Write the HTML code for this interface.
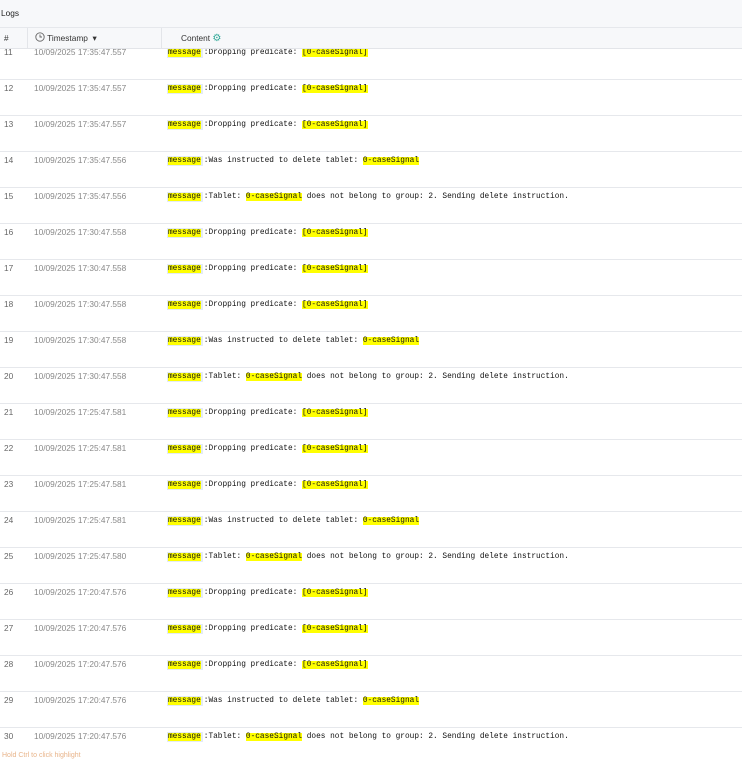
<!DOCTYPE html><html><head><style>
*{margin:0;padding:0;box-sizing:border-box}
body{width:742px;height:757px;overflow:hidden;background:#fff;font-family:"Liberation Sans",sans-serif;position:relative}
.top{position:absolute;left:0;top:0;width:742px;height:28px;background:#f7f8fa;border-bottom:1px solid #e6e8ec;font-size:8.3px;color:#222;padding:8px 0 0 1px}
.hdr{position:absolute;left:0;top:28px;width:742px;height:21px;background:#f7f8fa;border-bottom:1px solid #e3e5e9;font-size:8.3px;color:#333;z-index:2}
.hdr div{position:absolute;top:0;height:20px;line-height:20px}
.body{position:absolute;left:0;top:49px;width:742px;height:697px;overflow:hidden}
.rows{position:absolute;left:0;top:-5px;width:742px}
.row{height:36px;border-bottom:1px solid #e6e8ec;position:relative}
.n{position:absolute;left:4px;top:3px;font-size:8.3px;color:#666}
.ts{position:absolute;left:34px;top:3px;font-size:8.3px;color:#888}
.c{position:absolute;left:167px;top:4px;font-family:"Liberation Mono",monospace;font-size:7.8px;color:#111;line-height:11px;white-space:pre}
.m{background:#e3ebf5;padding:1px 2px 1px 1px;margin-right:1px}
.m b{font-weight:normal;background:#ffff00}
.y{background:#ffff00}
.foot{position:absolute;left:2px;top:752px;font-size:7px;color:#e8b48a}
</style></head><body>
<div class="top">Logs</div>
<div class="hdr">
<div style="left:4px">#</div>
<div style="left:27px;width:1px;background:#e3e5e9"></div>
<div style="left:35px"><svg width="10" height="10" viewBox="0 0 10 10" style="vertical-align:-1px"><circle cx="5" cy="5" r="4.2" fill="none" stroke="#666" stroke-width="0.9"/><path d="M5 2.5V5H7" fill="none" stroke="#666" stroke-width="0.9"/></svg> Timestamp &nbsp;▾</div>
<div style="left:161px;width:1px;background:#e3e5e9"></div>
<div style="left:181px">Content <span style="color:#3a9;font-size:10px">⚙</span></div>
</div>
<div class="body"><div class="rows" id="r">
</div></div>
<div class="foot">Hold Ctrl to click highlight</div>
<script>
var d=[["11","17:35:47.557",0],["12","17:35:47.557",0],["13","17:35:47.557",0],["14","17:35:47.556",1],["15","17:35:47.556",2],
["16","17:30:47.558",0],["17","17:30:47.558",0],["18","17:30:47.558",0],["19","17:30:47.558",1],["20","17:30:47.558",2],
["21","17:25:47.581",0],["22","17:25:47.581",0],["23","17:25:47.581",0],["24","17:25:47.581",1],["25","17:25:47.580",2],
["26","17:20:47.576",0],["27","17:20:47.576",0],["28","17:20:47.576",0],["29","17:20:47.576",1],["30","17:20:47.576",2]];
var t=['Dropping predicate: <span class="y">[0-caseSignal]</span>','Was instructed to delete tablet: <span class="y">0-caseSignal</span>','Tablet: <span class="y">0-caseSignal</span> does not belong to group: 2. Sending delete instruction.'];
var h='';d.forEach(function(x){h+='<div class="row"><div class="n">'+x[0]+'</div><div class="ts">10/09/2025 '+x[1]+'</div><div class="c"><span class="m"><b>message</b></span>:'+t[x[2]]+'</div></div>'});
document.getElementById('r').innerHTML=h;
</script>
</body></html>
